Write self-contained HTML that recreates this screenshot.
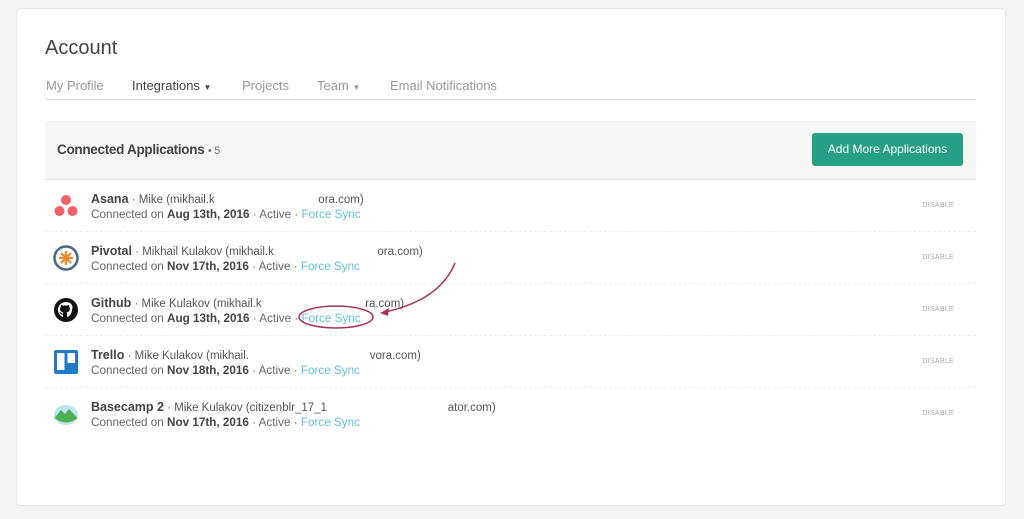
<!DOCTYPE html>
<html><head><style>
*{margin:0;padding:0;box-sizing:border-box}
body{width:1024px;height:519px;background:#f4f4f4;font-family:"Liberation Sans",sans-serif;position:relative;overflow:hidden}
.card{position:absolute;left:16px;top:8px;width:990px;height:498px;background:#fff;border:1px solid #e6e6e6;border-radius:4px}
.title{position:absolute;left:45px;top:37px;font-size:20px;color:#444}
.nav{position:absolute;left:46px;top:78px;font-size:13px;color:#999}
.nav span{position:absolute;white-space:nowrap}
.navline{position:absolute;left:45px;top:99px;width:931px;height:1px;background:#ddd}
.hdr{position:absolute;left:45px;top:121px;width:931px;height:59px;background:#f6f6f6;border-bottom:1px solid #e4e4e4}
.hdr .t{position:absolute;left:12px;top:21px;font-size:13.5px;color:#444;font-weight:bold;letter-spacing:-.3px}
.hdr .t small{font-weight:normal;font-size:11px;color:#777}
.btn{position:absolute;left:767px;top:12px;width:151px;height:33px;background:#26a085;border-radius:3px;color:#fff;font-size:12px;text-align:center;line-height:33px}
.row{position:absolute;left:45px;width:931px;height:52px;border-bottom:1px dashed #eee}
.row .n{position:absolute;left:46px;top:12px;font-size:11.5px;color:#555;white-space:nowrap}
.row .n b{font-size:12.5px;color:#444}
.row .s{position:absolute;left:46px;top:28px;font-size:11.7px;color:#666;white-space:nowrap}
.row .s b{color:#444;font-size:11.7px}
.row .s a{color:#5bc0de}
.row .d{position:absolute;right:22px;top:22px;font-size:7px;color:#aaa;letter-spacing:.3px}
.ic{position:absolute;left:8px;top:13px;width:26px;height:26px}
</style></head><body>
<div class="card"></div>
<div class="title">Account</div>
<div class="nav">
<span style="left:0">My Profile</span>
<span style="left:86px;color:#444">Integrations <span style="position:static;font-size:8px">▼</span></span>
<span style="left:196px">Projects</span>
<span style="left:271px">Team <span style="position:static;font-size:8px">▼</span></span>
<span style="left:344px">Email Notifications</span>
</div>
<div class="navline"></div>
<div class="hdr"><div class="t">Connected Applications <small>• 5</small></div><div class="btn">Add More Applications</div></div>

<div class="row" style="top:180px">
<svg class="ic" viewBox="0 0 26 26"><circle cx="13" cy="7" r="5" fill="#f2616a"/><circle cx="6.5" cy="18" r="5" fill="#f2616a"/><circle cx="19.5" cy="18" r="5" fill="#f2616a"/></svg>
<div class="n"><b>Asana</b> · Mike (mikhail.k<span style="color:#fff">xxxxxxxxxxxxxxxxxx</span>ora.com)</div>
<div class="s">Connected on <b>Aug 13th, 2016</b> · Active · <a>Force Sync</a></div><div class="d">DISABLE</div></div>

<div class="row" style="top:232px">
<svg class="ic" viewBox="0 0 26 26"><circle cx="13" cy="13" r="11.5" fill="#fff" stroke="#46698a" stroke-width="2.5"/><g stroke="#e88a2e" stroke-width="2.2"><line x1="13" y1="6" x2="13" y2="20"/><line x1="6" y1="13" x2="20" y2="13"/><line x1="8" y1="8" x2="18" y2="18"/><line x1="18" y1="8" x2="8" y2="18"/></g></svg>
<div class="n"><b>Pivotal</b> · Mikhail Kulakov (mikhail.k<span style="color:#fff">xxxxxxxxxxxxxxxxxx</span>ora.com)</div>
<div class="s">Connected on <b>Nov 17th, 2016</b> · Active · <a>Force Sync</a></div><div class="d">DISABLE</div></div>

<div class="row" style="top:284px">
<svg class="ic" viewBox="0 0 26 26"><circle cx="13" cy="13" r="12" fill="#111"/><path d="M13 5c-4.4 0-8 3.4-8 7.7 0 3.4 2.1 6.3 5 7.3v-2.5c-2 .4-2.400-.9-2.4-.9-.4-.9-.9-1.1-.9-1.1-.7-.5.1-.5.1-.5.7.1 1.1.8 1.1.8.6 1.1 1.7.8 2.1.6.1-.5.3-.8.5-1-1.7-.2-3.4-.8-3.4-3.6 0-.8.3-1.5.8-2-.1-.2-.3-.9.1-1.900 0 0 .6-.2 2.1.8a7 7 0 0 1 3.8 0c1.5-1 2.1-.8 2.1-.8.4 1 .2 1.7.1 1.9.5.5.8 1.2.8 2 0 2.8-1.7 3.4-3.4 3.6.3.2.5.7.5 1.3V20c2.9-1 5-3.9 5-7.3C21 8.4 17.4 5 13 5z" fill="#fff"/></svg>
<div class="n"><b>Github</b> · Mike Kulakov (mikhail.k<span style="color:#fff">xxxxxxxxxxxxxxxxxx</span>ra.com)</div>
<div class="s">Connected on <b>Aug 13th, 2016</b> · Active · <a>Force Sync</a></div><div class="d">DISABLE</div></div>

<div class="row" style="top:336px">
<svg class="ic" viewBox="0 0 26 26"><rect x="1" y="1" width="24" height="24" rx="2" fill="#1e7bc4"/><rect x="4" y="4" width="7.5" height="17" fill="#fff"/><rect x="14.5" y="4" width="7.5" height="10" fill="#fff"/></svg>
<div class="n"><b>Trello</b> · Mike Kulakov (mikhail.<span style="color:#fff">xxxxxxxxxxxxxxxxxxxxx</span>vora.com)</div>
<div class="s">Connected on <b>Nov 18th, 2016</b> · Active · <a>Force Sync</a></div><div class="d">DISABLE</div></div>

<div class="row" style="top:388px;border-bottom:none">
<svg class="ic" viewBox="0 0 26 26"><ellipse cx="13" cy="14" rx="12" ry="10" fill="#bfe3f0"/><path d="M1.5 17 L8 9 L12 13 L16 8 L24.5 17 Q13 26 1.5 17z" fill="#4caf50"/></svg>
<div class="n"><b>Basecamp 2</b> · Mike Kulakov (citizenblr_17_1<span style="color:#fff">xxxxxxxxxxxxxxxxxxxxx</span>ator.com)</div>
<div class="s">Connected on <b>Nov 17th, 2016</b> · Active · <a>Force Sync</a></div><div class="d">DISABLE</div></div>

<svg style="position:absolute;left:0;top:0" width="1024" height="519">
<ellipse cx="336" cy="317" rx="37" ry="11" fill="none" stroke="#a8325e" stroke-width="1.5"/>
<path d="M455 263 Q440 300 385 312" fill="none" stroke="#a8325e" stroke-width="1.5"/>
<path d="M380 313 L389 308 L388 316z" fill="#a8325e"/>
</svg>
</body></html>
